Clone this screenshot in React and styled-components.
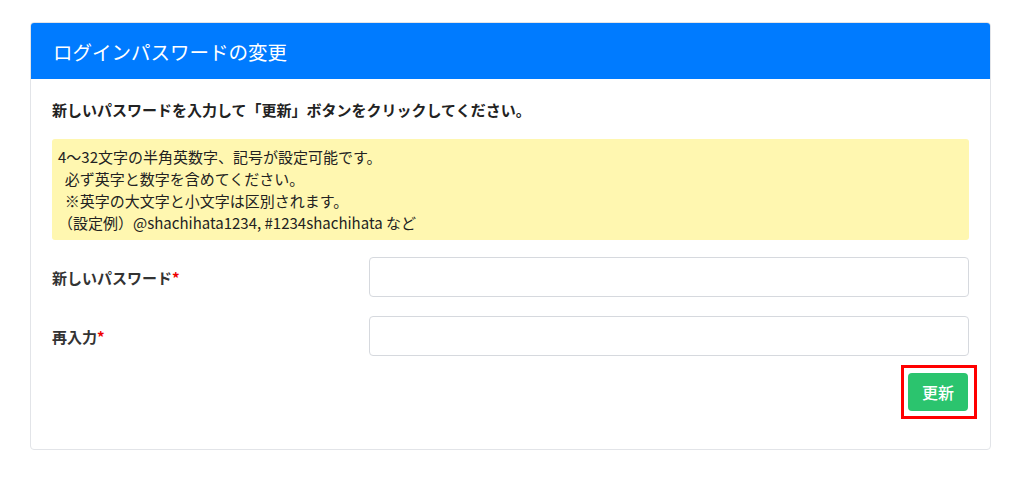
import React from 'react'
import styled, { createGlobalStyle } from 'styled-components'

const Global = createGlobalStyle`
  body {
    margin: 0;
    background: #fff;
    font-family: "Noto Sans CJK JP", "Noto Sans", sans-serif;
    color: #222;
  }
`

const App = () => {
  return (
    <>
      <Global />
      <Page>
        <Card>
          <CardHeader>ログインパスワードの変更</CardHeader>
          <CardBody>
            <Lead>新しいパスワードを入力して「更新」ボタンをクリックしてください。</Lead>
            <Notice>
              <div>4〜32文字の半角英数字、記号が設定可能です。</div>
              <div>&nbsp;&nbsp;必ず英字と数字を含めてください。</div>
              <div>&nbsp;&nbsp;※英字の大文字と小文字は区別されます。</div>
              <div>（設定例）@shachihata1234, #1234shachihata など</div>
            </Notice>
            <Field>
              <Label>新しいパスワード<Req>*</Req></Label>
              <Input type="password" />
            </Field>
            <Field>
              <Label>再入力<Req>*</Req></Label>
              <Input type="password" />
            </Field>
            <Actions>
              <Marked>
                <SubmitButton>更新</SubmitButton>
              </Marked>
            </Actions>
          </CardBody>
        </Card>
      </Page>
    </>
  )
}

export default App

const Page = styled.div`
  padding: 22px 32px 0 30px;
`
const Card = styled.div`
  width: 961px;
  height: 428px;
  box-sizing: border-box;
  border: 1px solid #e2e4e8;
  border-radius: 4px;
  overflow: hidden;
  background: #fff;
`
const CardHeader = styled.div`
  height: 56px;
  background: #007bff;
  color: #fff;
  font-size: 19.5px;
  display: flex;
  align-items: center;
  padding-left: 22px;
`
const CardBody = styled.div`
  padding: 20px 21px 0 21px;
`
const Lead = styled.div`
  font-size: 15px;
  font-weight: bold;
  line-height: 22px;
  margin-bottom: 18px;
`
const Notice = styled.div`
  background: #fff7b0;
  border-radius: 3px;
  padding: 7px 6px 6px;
  font-size: 15px;
  line-height: 22px;
  margin-bottom: 17px;
`
const Field = styled.div`
  display: grid;
  grid-template-columns: 317px 1fr;
  align-items: center;
  margin-bottom: 19px;
`
const Label = styled.label`
  font-size: 15px;
  font-weight: bold;
  color: #333;
`
const Req = styled.span`
  color: #e00;
`
const Input = styled.input`
  height: 40px;
  box-sizing: border-box;
  border: 1px solid #d6d9de;
  border-radius: 4px;
  outline: none;
`
const Actions = styled.div`
  display: flex;
  justify-content: flex-end;
  margin-top: -10px;
`
const Marked = styled.div`
  border: 3px solid #f00;
  padding: 5px 6px 5px 4px;
  margin-right: -8px;
`
const SubmitButton = styled.button`
  width: 60px;
  height: 38px;
  border: none;
  border-radius: 4px;
  background: #2bc46e;
  color: #fff;
  font-family: inherit;
  font-size: 16px;
  font-weight: 500;
  display: block;
`
